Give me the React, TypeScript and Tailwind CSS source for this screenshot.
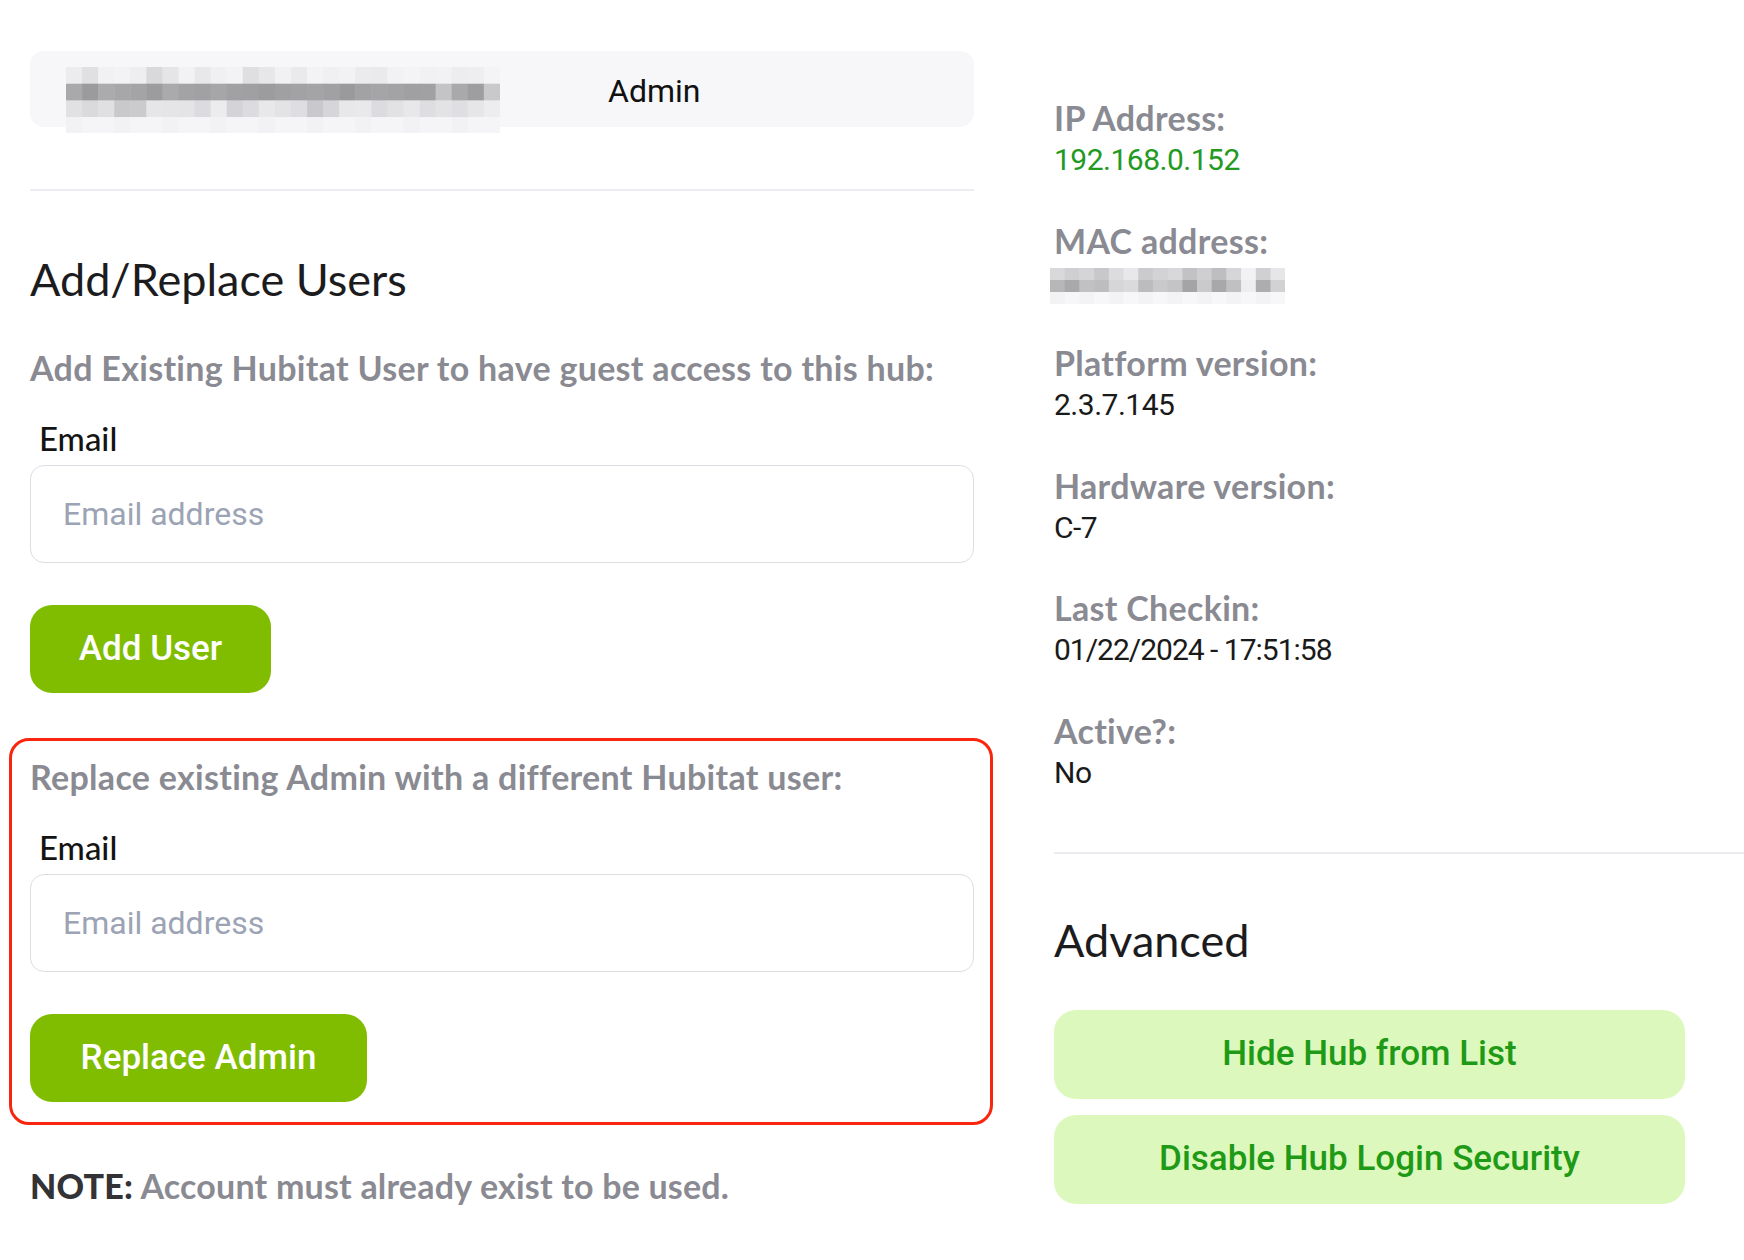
import React from "react";

const bar0 = ["#ececef","#e0e0e3","#f1f1f3","#f3f3f5","#eeeef0","#d9d9dc","#e5e5e8","#f2f2f4","#e8e8eb","#f0f0f2","#f3f3f5","#dfdfe2","#e7e7ea","#f1f1f3","#eaeaed","#f3f3f5","#f0f0f2","#f2f2f4","#ebebee","#eaeaed","#f2f2f4","#f4f4f6","#f1f1f3","#f2f2f4","#ededf0","#eeeef1","#f4f4f6"];
const bar1 = ["#a9a9ab","#9b9b9d","#ababad","#a7a7a9","#a4a4a6","#9c9c9e","#aaaaac","#a3a3a5","#a1a1a3","#a6a6a8","#a1a1a3","#a0a0a2","#9c9c9e","#a0a0a2","#a2a2a4","#a4a4a6","#a1a1a3","#9a9a9c","#a2a2a4","#a5a5a7","#a3a3a5","#a0a0a2","#a1a1a3","#c4c4c6","#a9a9ab","#9e9ea0","#c9c9cb"];
const bar2 = ["#e1e1e4","#dadadd","#e0e0e3","#c9c9cc","#cbcbce","#e6e6e9","#e5e5e8","#e4e4e7","#dcdce0","#ececef","#d4d4d8","#dcdce0","#e8e8eb","#e3e3e6","#dedee2","#c9c9cd","#d6d6da","#e8e8eb","#e9e9ec","#dcdce0","#e2e2e5","#e8e8eb","#dedee2","#e3e3e6","#dfdfe3","#e6e6e9","#ededf0"];
const bar3 = bar0.map((_, i) => (i % 3 === 0 ? "#f2f2f5" : "#f5f5f8"));

const mac0 = ["#d9d9db","#cfcfd1","#d5d5d7","#c8c8ca","#dcdcde","#e8e8ea","#cbcbcd","#d3d3d5","#d8d8da","#c2c2c4","#cfcfd1","#bebec0","#d6d6d8","#f2f2f4","#d0d0d2","#e6e6e8"];
const mac1 = ["#b7b7b9","#a9a9ab","#c1c1c3","#bdbdbf","#d6d6d8","#dadadc","#bcbcbe","#c9c9cb","#c4c4c6","#a4a4a6","#cacacc","#a8a8aa","#c0c0c2","#eeeef0","#adadaf","#d2d2d4"];
const mac2 = mac0.map((_, i) => (i % 2 === 0 ? "#f3f3f5" : "#f7f7f9"));

function Mosaic({ rows, cw, rh, w, h }: { rows: string[][]; cw: number; rh: number; w: number; h: number }) {
  return (
    <svg width={w} height={h} viewBox={`0 0 ${w} ${h}`} className="block shrink-0">
      {rows.map((row, r) =>
        row.map((c, i) => (
          <rect key={`${r}-${i}`} x={i * cw} y={r * rh} width={cw + 0.5} height={rh + 0.5} fill={c} />
        ))
      )}
    </svg>
  );
}

function Info({ label, children }: { label: string; children: React.ReactNode }) {
  return (
    <div className="flex flex-col">
      <div className="text-[34px] leading-[40px] font-bold tracking-[0.3px] text-[#8a8a92]">{label}</div>
      <div className="mt-[2px] h-[40px]">{children}</div>
    </div>
  );
}

function EmailField() {
  return (
    <>
      <div className="ml-[9px] mt-[30px] text-[33px] leading-[40px] text-[#141414] font-medium">Email</div>
      <input
        placeholder="Email address"
        className="mt-[7px] h-[98px] w-full rounded-[14px] border-[1.5px] border-[#dcdee4] bg-white pl-[32px] font-['Roboto',sans-serif] text-[32px] text-[#222] outline-none placeholder:text-[#9ba3b4]"
      />
    </>
  );
}

export default function App() {
  return (
    <div className="min-h-[1260px] w-[1744px] bg-white font-['Lato',sans-serif] flex">
      {/* Left column */}
      <div className="ml-[30px] w-[944px] pt-[51px] flex flex-col">
        <div className="h-[76px] rounded-[14px] bg-[#f7f7fa] flex items-start pl-[36px] pt-[16px]">
          <Mosaic rows={[bar0, bar1, bar2, bar3]} cw={16.07} rh={16.7} w={434} h={66} />
          <div className="ml-[108px] font-['Roboto',sans-serif] text-[32px] leading-[44px] text-[#111] mt-[2px]">Admin</div>
        </div>
        <div className="mt-[62px] h-[2px] bg-[#ececf1]" />
        <div className="mt-[62px] text-[45px] leading-[53px] text-[#1c1c1e]">Add/Replace Users</div>
        <div className="mt-[42px] text-[34px] leading-[40px] font-bold tracking-[0.3px] text-[#8a8a92]">
          Add Existing Hubitat User to have guest access to this hub:
        </div>
        <EmailField />
        <button className="mt-[42px] h-[88px] w-[241px] rounded-[22px] bg-[#80bd01] font-['Roboto',sans-serif] text-[35px] font-medium text-white">
          Add User
        </button>

        <div className="mt-[45px] -ml-[21px] -mr-[19px] rounded-[20px] border-[3px] border-[#f8260f] pl-[18px] pr-[16px] pt-[16px] pb-[20px] flex flex-col">
          <div className="text-[34px] leading-[40px] font-bold tracking-[0.3px] text-[#8a8a92]">
            Replace existing Admin with a different Hubitat user:
          </div>
          <EmailField />
          <button className="mt-[42px] h-[88px] w-[337px] rounded-[22px] bg-[#80bd01] font-['Roboto',sans-serif] text-[35px] font-medium text-white">
            Replace Admin
          </button>
        </div>

        <div className="mt-[41px] text-[34px] leading-[40px] font-bold tracking-[0.2px] text-[#8a8a92]">
          <span className="font-black text-[#333336]">NOTE:</span> Account must already exist to be used.
        </div>
      </div>

      {/* Right column */}
      <div className="ml-[80px] flex-1 pt-[98px] flex flex-col">
        <div className="flex flex-col gap-[40.5px]">
          <Info label="IP Address:">
            <div className="font-['Roboto',sans-serif] text-[30px] leading-[40px] tracking-[-0.5px] text-[#229a1f]">192.168.0.152</div>
          </Info>
          <Info label="MAC address:">
            <div className="-ml-[4px] pt-[5px]">
              <Mosaic rows={[mac0, mac1, mac2]} cw={14.7} rh={12} w={235} h={36} />
            </div>
          </Info>
          <Info label="Platform version:">
            <div className="font-['Roboto',sans-serif] text-[30px] leading-[40px] tracking-[-0.5px] text-[#1a1a1a]">2.3.7.145</div>
          </Info>
          <Info label="Hardware version:">
            <div className="font-['Roboto',sans-serif] text-[30px] leading-[40px] tracking-[-0.5px] text-[#1a1a1a]">C-7</div>
          </Info>
          <Info label="Last Checkin:">
            <div className="font-['Roboto',sans-serif] text-[30px] leading-[40px] tracking-[-1px] text-[#1a1a1a]">01/22/2024 - 17:51:58</div>
          </Info>
          <Info label="Active?:">
            <div className="font-['Roboto',sans-serif] text-[30px] leading-[40px] tracking-[-0.5px] text-[#1a1a1a]">No</div>
          </Info>
        </div>
        <div className="mt-[59px] h-[2px] bg-[#ececf1]" />
        <div className="mt-[60px] text-[45px] leading-[53px] text-[#1c1c1e]">Advanced</div>
        <button className="mt-[43px] h-[89px] w-[631px] rounded-[22px] bg-[#dcf8bd] font-['Roboto',sans-serif] text-[35px] font-medium text-[#1f9a16]">
          Hide Hub from List
        </button>
        <button className="mt-[16px] h-[89px] w-[631px] rounded-[22px] bg-[#dcf8bd] font-['Roboto',sans-serif] text-[35px] font-medium text-[#1f9a16]">
          Disable Hub Login Security
        </button>
      </div>
    </div>
  );
}
